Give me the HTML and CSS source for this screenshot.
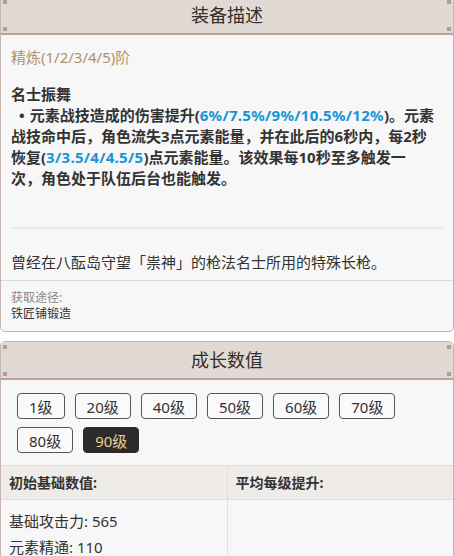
FILE: index.html
```html
<!DOCTYPE html>
<html lang="zh-CN">
<head>
    <meta charset="UTF-8">
    <meta name="viewport" content="width=device-width, initial-scale=1.0">
    <title>武器详情</title>
    <link rel="stylesheet" href="styles.css">
</head>
<body>
    <div class="page">
        <div class="panel">
            <div class="panel-head">装备描述</div>
            <div class="panel-body">
                <p class="refine">精炼(1/2/3/4/5)阶</p>
                <div class="effect">
                    <p class="effect-name">名士振舞</p>
                    <p class="effect-text"><span class="dot">•</span>元素战技造成的伤害提升(<span class="num">6%/7.5%/9%/10.5%/12%</span>)。元素<br>战技命中后，角色流失3点元素能量，并在此后的6秒内，每2秒<br>恢复(<span class="num">3/3.5/4/4.5/5</span>)点元素能量。该效果每10秒至多触发一<br>次，角色处于队伍后台也能触发。</p>
                </div>
                <p class="story">曾经在八酝岛守望「祟神」的枪法名士所用的特殊长枪。</p>
            </div>
            <div class="source">
                <p class="source-label">获取途径:</p>
                <p class="source-text">铁匠铺锻造</p>
            </div>
        </div>

        <div class="panel">
            <div class="panel-head">成长数值</div>
            <div class="levels">
                <button class="lv">1级</button>
                <button class="lv">20级</button>
                <button class="lv">40级</button>
                <button class="lv">50级</button>
                <button class="lv">60级</button>
                <button class="lv">70级</button>
                <button class="lv">80级</button>
                <button class="lv active">90级</button>
            </div>
            <div class="stats">
                <div class="stats-col">
                    <div class="stats-head">初始基础数值:</div>
                    <div class="stats-body">
                        <p>基础攻击力: 565</p>
                        <p>元素精通: 110</p>
                    </div>
                </div>
                <div class="stats-col">
                    <div class="stats-head">平均每级提升:</div>
                    <div class="stats-body"></div>
                </div>
            </div>
        </div>
    </div>
</body>
</html>
```

FILE: styles.css
```css
body {
    margin: 0;
    padding: 0;
    background-color: #ffffff;
    font-family: "Noto Sans", "Noto Sans CJK SC", sans-serif;
    color: #333;
    overflow: hidden;
}

p {
    margin: 0;
}

.page {
    margin-top: -4px;
}

.panel {
    background-color: #f7f7f7;
    border: 1px solid #c7b3b0;
    border-radius: 5px;
    margin-bottom: 9px;
    overflow: hidden;
}

.panel-head {
    position: relative;
    height: 36px;
    line-height: 36px;
    text-align: center;
    font-size: 18px;
    color: #332d2b;
    background-color: #e1dad4;
    border-bottom: 2px solid #bfa09d;
}

/* little corner squares on the header */
.panel-head::before,
.panel-head::after {
    content: "";
    position: absolute;
    top: 3px;
    width: 4px;
    height: 4px;
    background-color: #b79b9b;
    box-shadow: 0 27px 0 #b79b9b;
}

.panel-head::before {
    left: 2px;
}

.panel-head::after {
    right: 2px;
}

.panel-body {
    padding: 11px 2px 0 10px;
}

.refine {
    font-size: 15px;
    line-height: 22px;
    color: #b0916c;
}

.effect {
    margin-top: 16px;
    margin-right: 8px;
    padding-bottom: 38px;
    border-bottom: 2px solid #e8e8e8;
}

.effect-name,
.effect-text {
    font-size: 15px;
    line-height: 21px;
    font-weight: bold;
    color: #333;
}

.effect-text {
    margin-right: -8px;
    white-space: nowrap;
}

.dot {
    padding: 0 5px 0 8px;
}

.num {
    color: #1a94d4;
    letter-spacing: 0.3px;
}

.story {
    font-size: 15px;
    line-height: 22px;
    padding: 22px 0 7px;
    color: #333;
}

.source {
    border-top: 1px solid #dcdcdc;
    padding: 9px 10px 9px;
    font-size: 12px;
    line-height: 16px;
}

.source-label {
    color: #888;
}

.source-text {
    color: #333;
}

.levels {
    display: flex;
    flex-wrap: wrap;
    gap: 8px 10px;
    padding: 13px 16px 12px;
}

.lv {
    font-family: "Noto Sans", "Noto Sans CJK SC", sans-serif;
    font-size: 15px;
    height: 26px;
    padding: 0 11px;
    color: #333;
    background-color: #fafafa;
    border: 1px solid #555;
    border-radius: 4px;
}

.lv.active {
    background-color: #2d2b29;
    border-color: #2d2b29;
    color: #e9cf98;
}

.stats {
    display: flex;
    border-top: 1px solid #e2ded9;
}

.stats-col {
    flex: 1;
}

.stats-col + .stats-col {
    border-left: 1px solid #e2ded9;
}

.stats-head {
    height: 33px;
    line-height: 33px;
    padding: 0 8px;
    font-size: 14px;
    font-weight: bold;
    background-color: #eeebe8;
    border-bottom: 1px solid #e2ded9;
}

.stats-body {
    padding: 8px 8px;
}

.stats-body p {
    font-size: 15px;
    line-height: 26px;
}
```
